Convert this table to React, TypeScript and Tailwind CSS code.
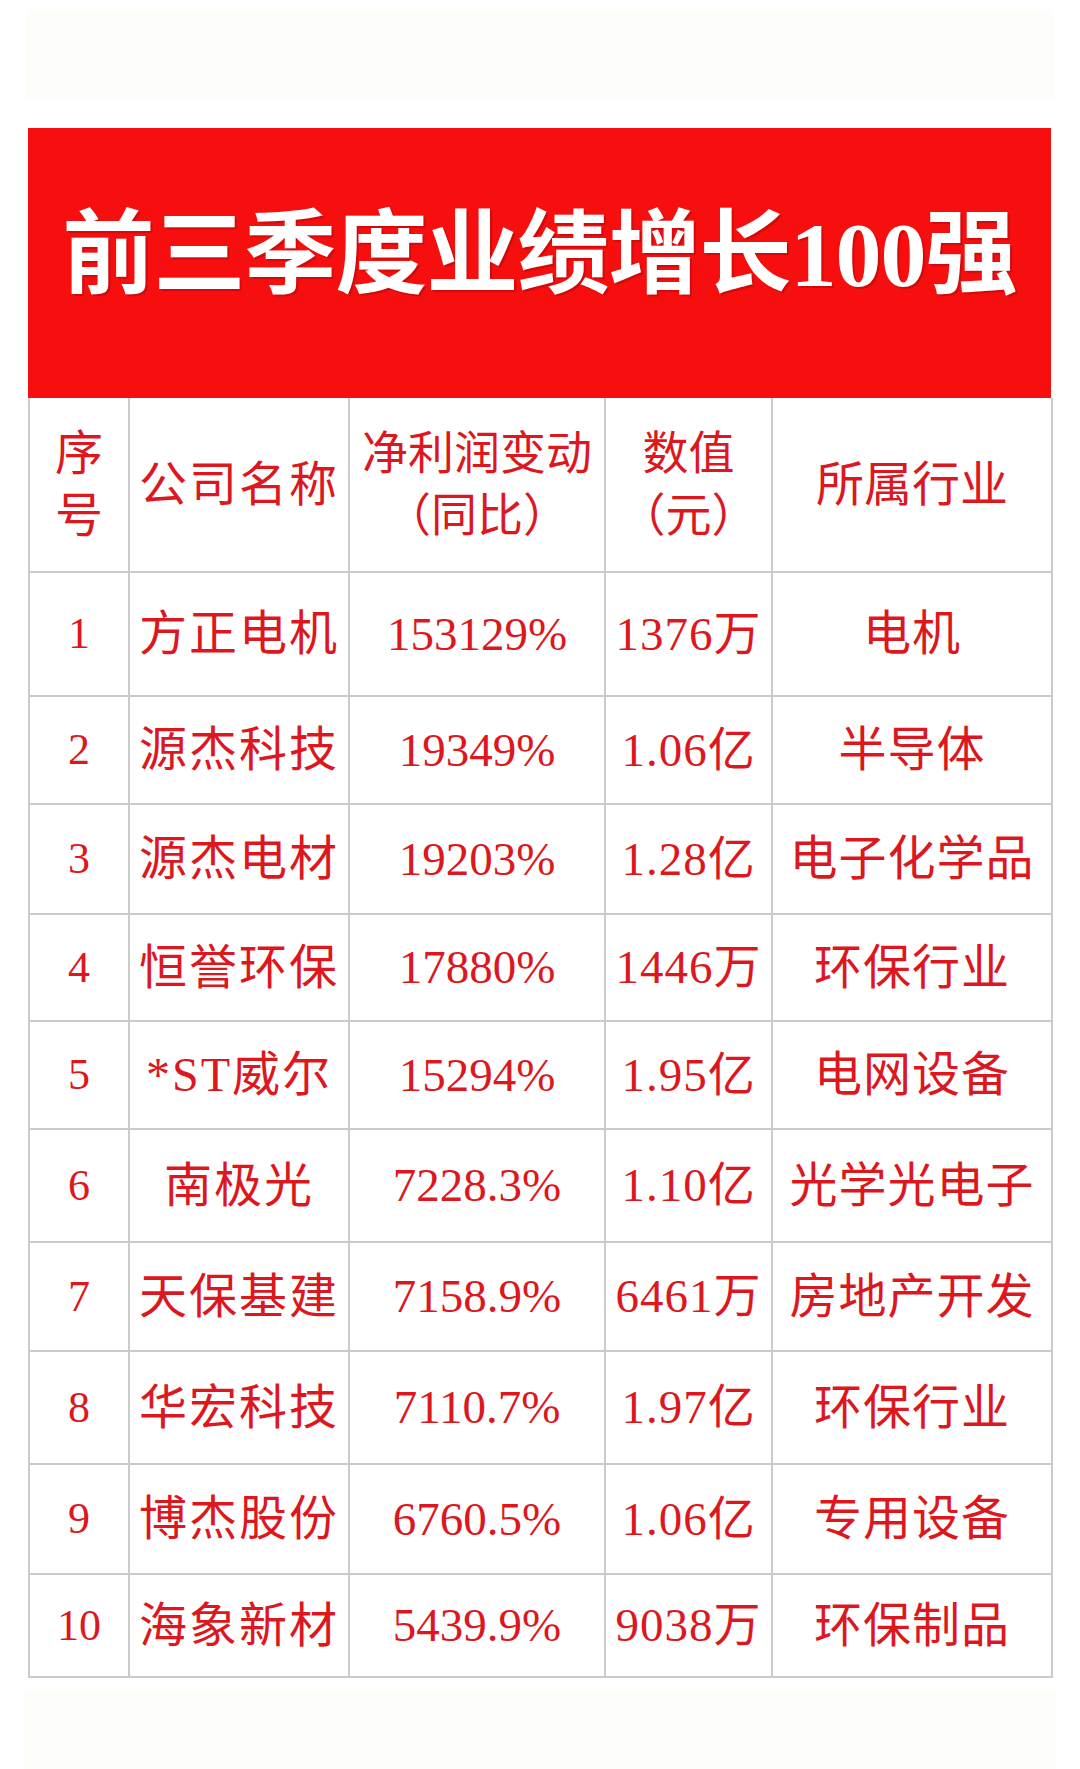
import React from "react";

const FONT = '"Liberation Serif", "Noto Sans CJK SC", serif';

const rows = [
  { no: "1", name: "方正电机", pct: "153129%", val: "1376万", ind: "电机", h: "h-[124px]" },
  { no: "2", name: "源杰科技", pct: "19349%", val: "1.06亿", ind: "半导体", h: "h-[108px]" },
  { no: "3", name: "源杰电材", pct: "19203%", val: "1.28亿", ind: "电子化学品", h: "h-[110px]" },
  { no: "4", name: "恒誉环保", pct: "17880%", val: "1446万", ind: "环保行业", h: "h-[107px]" },
  { no: "5", name: "*ST威尔", pct: "15294%", val: "1.95亿", ind: "电网设备", h: "h-[108px]" },
  { no: "6", name: "南极光", pct: "7228.3%", val: "1.10亿", ind: "光学光电子", h: "h-[113px]" },
  { no: "7", name: "天保基建", pct: "7158.9%", val: "6461万", ind: "房地产开发", h: "h-[109px]" },
  { no: "8", name: "华宏科技", pct: "7110.7%", val: "1.97亿", ind: "环保行业", h: "h-[113px]" },
  { no: "9", name: "博杰股份", pct: "6760.5%", val: "1.06亿", ind: "专用设备", h: "h-[110px]" },
  { no: "10", name: "海象新材", pct: "5439.9%", val: "9038万", ind: "环保制品", h: "h-[103px]" },
];

const cell = "flex items-center justify-center border-r-2 border-b-2 border-[#cbcbcb] text-center";

export default function App() {
  return (
    <div className="w-[1080px] min-h-[1769px] bg-white" style={{ fontFamily: FONT }}>
      {/* faint paper strip on top */}
      <div className="h-[128px] px-[26px] pt-[10px] pb-[28px]">
        <div className="h-full bg-[#fdfdfa]" />
      </div>

      <div className="mx-[28px] w-[1023px]">
        <div className="h-[270px] bg-[#f70f0f] flex items-center justify-center pb-[16px]">
          <h1 className="text-[92px] leading-none font-semibold text-white tracking-[-1px] [text-shadow:2px_2px_1px_rgba(120,0,0,0.3)]">
            前三季度业绩增长100强
          </h1>
        </div>

        <div className="grid grid-cols-[100px_220px_256px_167px_280px] border-l-2 border-[#cbcbcb] text-[#dc181e]">
          {/* header */}
          <div className={`${cell} h-[175px] flex-col text-[48px] leading-[62px]`}>
            <span>序</span>
            <span>号</span>
          </div>
          <div className={`${cell} h-[175px] text-[48px] tracking-[2px]`}>公司名称</div>
          <div className={`${cell} h-[175px] flex-col text-[46px] leading-[62px]`}>
            <span>净利润变动</span>
            <span>（同比）</span>
          </div>
          <div className={`${cell} h-[175px] flex-col text-[46px] leading-[62px]`}>
            <span>数值</span>
            <span>（元）</span>
          </div>
          <div className={`${cell} h-[175px] text-[48px]`}>所属行业</div>

          {rows.map((r) => (
            <React.Fragment key={r.no}>
              <div className={`${cell} ${r.h} text-[44px]`}>{r.no}</div>
              <div className={`${cell} ${r.h} text-[48px] tracking-[2px]`}>{r.name}</div>
              <div className={`${cell} ${r.h} text-[47px]`}>{r.pct}</div>
              <div className={`${cell} ${r.h} text-[47px] tracking-[1px]`}>{r.val}</div>
              <div className={`${cell} ${r.h} text-[48px] tracking-[1px]`}>{r.ind}</div>
            </React.Fragment>
          ))}
        </div>
      </div>

      {/* faint paper strip at bottom */}
      <div className="px-[24px] pt-[12px]">
        <div className="h-[79px] bg-[#fdfdfa]" />
      </div>
    </div>
  );
}
